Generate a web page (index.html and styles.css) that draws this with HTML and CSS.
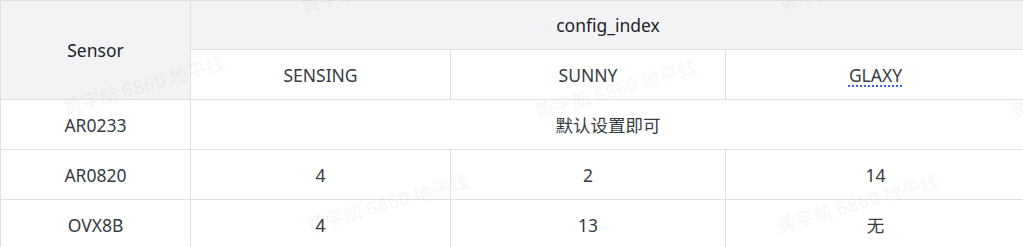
FILE: index.html
```html
<!DOCTYPE html>
<html lang="zh">
<head>
<meta charset="utf-8">
<title>config_index</title>
<link rel="stylesheet" href="styles.css">
</head>
<body>
<div class="wrap">
  <table class="grid">
    <colgroup>
      <col class="c1"><col class="c2"><col class="c3"><col class="c4">
    </colgroup>
    <tr class="r1">
      <th class="head" rowspan="2">Sensor</th>
      <th class="head" colspan="3">config_index</th>
    </tr>
    <tr class="r2">
      <td>SENSING</td>
      <td>SUNNY</td>
      <td><span class="mark">GLAXY</span></td>
    </tr>
    <tr>
      <td>AR0233</td>
      <td colspan="3">默认设置即可</td>
    </tr>
    <tr>
      <td>AR0820</td>
      <td>4</td>
      <td>2</td>
      <td>14</td>
    </tr>
    <tr>
      <td>OVX8B</td>
      <td>4</td>
      <td>13</td>
      <td>无</td>
    </tr>
  </table>
  <div class="watermarks" aria-hidden="true">
    <span class="wm wm1">黄宇航 6860 地平线</span>
    <span class="wm wm2">黄宇航 6860 地平线</span>
    <span class="wm wm3">黄宇航 6860 地平线</span>
    <span class="wm wm4">黄宇航 6860 地平线</span>
    <span class="wm wm5">黄宇航 6860 地平线</span>
    <span class="wm wm6">黄宇航 6860 地平线</span>
    <span class="wm wm7">黄宇航 6860 地平线</span>
  </div>
</div>
</body>
</html>
```

FILE: styles.css
```css
html, body {
  margin: 0;
  padding: 0;
  background: #ffffff;
  overflow: hidden;
}

.wrap {
  position: relative;
  width: 1025px;
  height: 247px;
  overflow: hidden;
}

.grid {
  border-collapse: collapse;
  table-layout: fixed;
  width: 1026px;
  font-family: "Noto Sans", "Noto Sans CJK SC", sans-serif;
  font-size: 17.5px;
  color: #373c43;
}

.c1 { width: 190px; }
.c2 { width: 260px; }
.c3 { width: 275px; }
.c4 { width: 300px; }

.grid th,
.grid td {
  border: 1px solid #dee0e3;
  text-align: center;
  vertical-align: middle;
  padding: 0;
  height: 49px;
  line-height: 24px;
  font-weight: 400;
}

.grid tr.r1 th,
.grid tr.r1 td {
  height: 48px;
}

.grid .head {
  background: #f2f3f5;
  color: #1f2329;
}

.mark {
  text-decoration: underline dotted #3a5ff0;
  text-decoration-thickness: 1.5px;
  text-underline-offset: 4px;
}

.watermarks {
  position: absolute;
  inset: 0;
  pointer-events: none;
}

.wm {
  position: absolute;
  font-family: "Noto Sans CJK SC", "Noto Sans", sans-serif;
  font-size: 19px;
  font-weight: 700;
  line-height: 22px;
  color: rgba(0, 0, 0, 0.04);
  white-space: nowrap;
  transform: rotate(-16deg);
  transform-origin: 0 100%;
}

.wm1 { left: 66px; top: 96px; }
.wm2 { left: 538px; top: 100px; }
.wm3 { left: 310px; top: 214px; }
.wm4 { left: 780px; top: 214px; }
.wm5 { left: 304px; top: -6px; }
.wm6 { left: 782px; top: -8px; }
.wm7 { left: 1014px; top: 100px; }
```
